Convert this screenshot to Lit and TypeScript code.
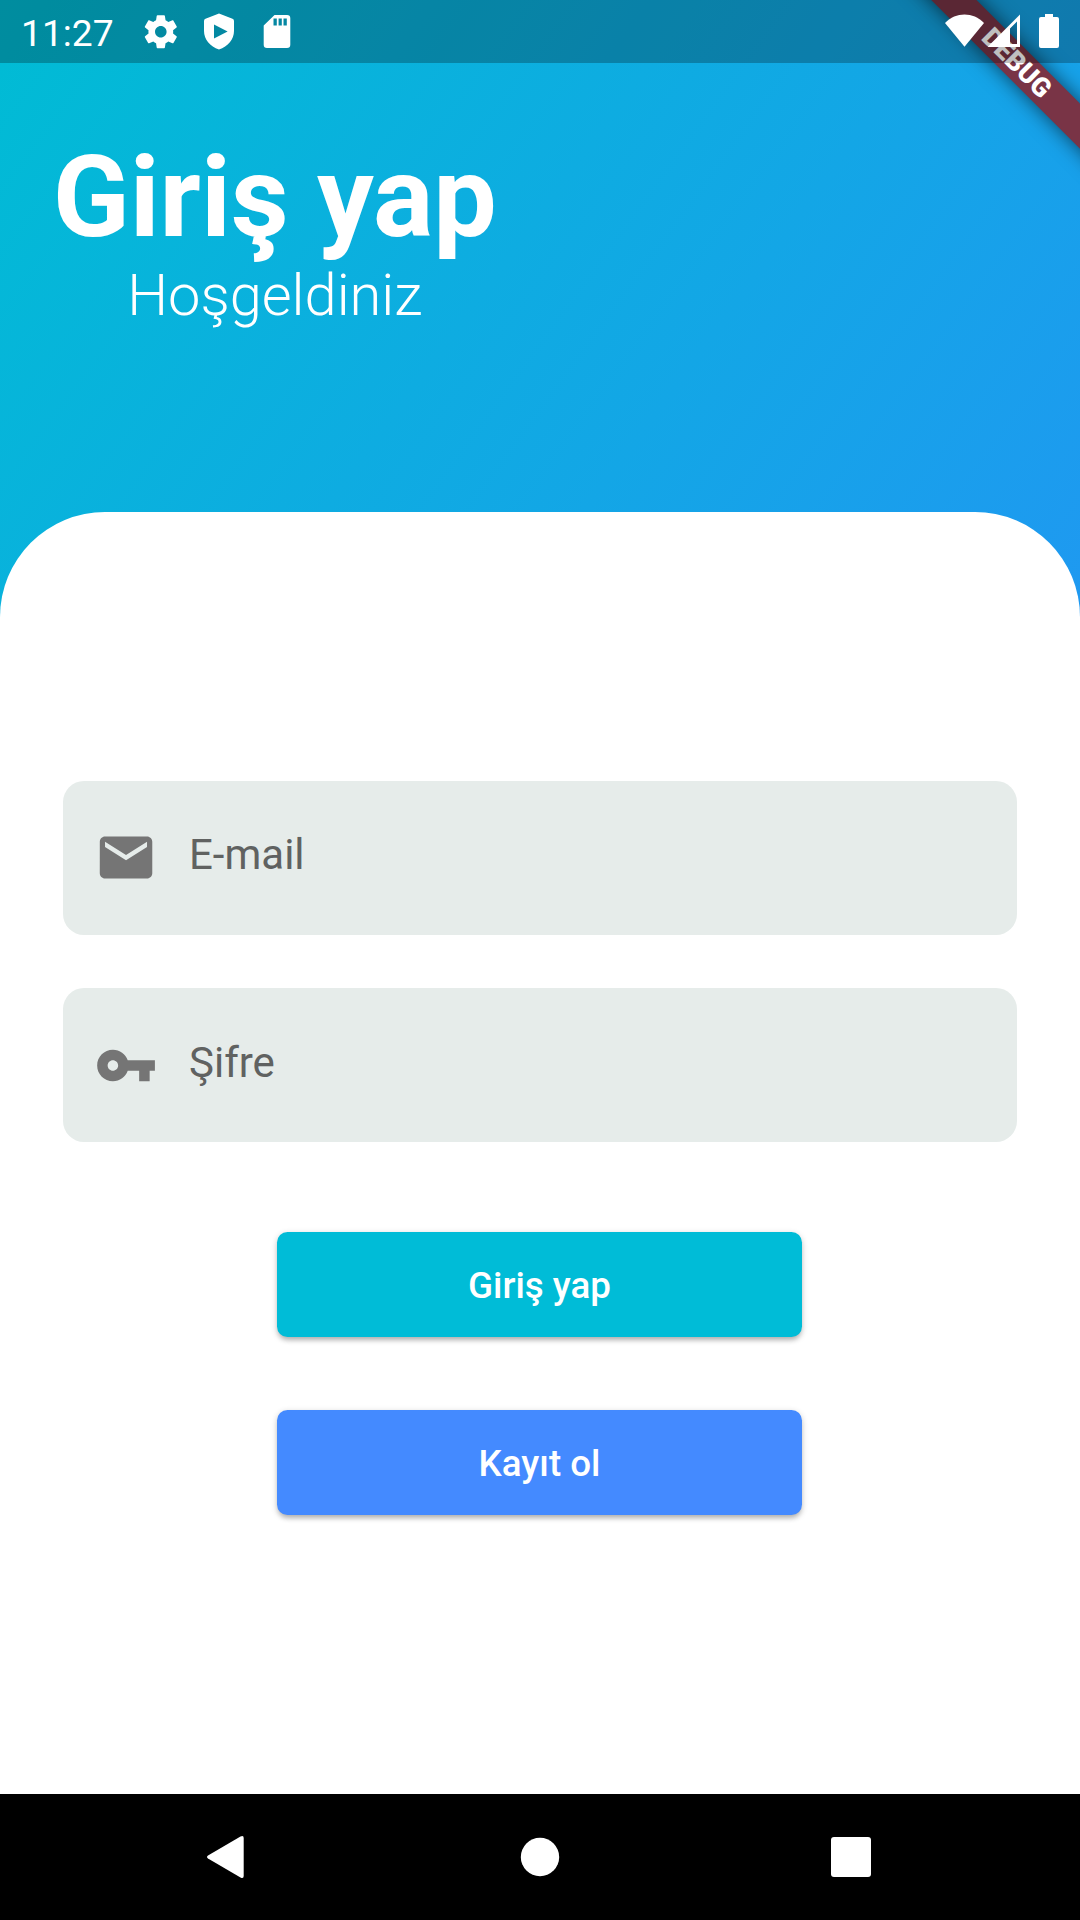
import { LitElement, html, svg, css } from "lit";
import { customElement, property } from "lit/decorators.js";

const FONT = css`Roboto, "Noto Sans", sans-serif`;

@customElement("status-bar")
class StatusBar extends LitElement {
  static styles = css`
    :host { display: flex; align-items: center; height: 63px; background: rgba(0, 0, 0, 0.25); color: #fff; font-family: ${FONT}; }
    .clock { width: 141px; padding: 3px 0 0 21px; box-sizing: border-box; font-size: 37.2px; line-height: 63px; }
    svg { display: block; flex: none; fill: currentColor; }
  `;
  render() {
    return html`
      <div class="clock">11:27</div>
      <svg width="939" height="63" viewBox="141 0 939 63">
        <g transform="translate(141 12) scale(1.65)">
          <path d="M19.43 12.98c.04-.32.07-.64.07-.98s-.03-.66-.07-.98l2.11-1.65c.19-.15.24-.42.12-.64l-2-3.46c-.12-.22-.39-.3-.61-.22l-2.49 1c-.52-.4-1.08-.73-1.69-.98l-.38-2.65C14.46 2.18 14.25 2 14 2h-4c-.25 0-.46.18-.49.42l-.38 2.65c-.61.25-1.17.59-1.69.98l-2.49-1c-.23-.09-.49 0-.61.22l-2 3.46c-.13.22-.07.49.12.64l2.11 1.65c-.04.32-.07.65-.07.98s.03.66.07.98l-2.11 1.65c-.19.15-.24.42-.12.64l2 3.46c.12.22.39.3.61.22l2.49-1c.52.4 1.08.73 1.69.98l.38 2.65c.03.24.24.42.49.42h4c.25 0 .46-.18.49-.42l.38-2.65c.61-.25 1.17-.59 1.69-.98l2.49 1c.23.09.49 0 .61-.22l2-3.46c.12-.22.07-.49-.12-.64l-2.11-1.65zM12 15.5c-1.93 0-3.5-1.57-3.5-3.5s1.57-3.5 3.5-3.5 3.5 1.57 3.5 3.5-1.57 3.5-3.5 3.5z"></path>
        </g>
        <path fill-rule="evenodd" d="M219 13.6L205.500 18.800Q204 19.400 204 21V31C204 39.5 210 46.6 219 49.4C228 46.6 234 39.5 234 31V21Q234 19.400 232.500 18.800ZM214 24.6L227.6 31.6L214 38.4Z"></path>
        <path fill-rule="evenodd" d="M274.5 15H287a3.3 3.3 0 0 1 3.3 3.3V44.700a3.300 3.300 0 0 1-3.300 3.300H267a3.300 3.300 0 0 1-3.300-3.300V25.500ZM273.500 18.500V25.500H276.800V18.500ZM278.600 18.500V25.500H281.800V18.500ZM283.500 18.500V25.500H286.800V18.500Z"></path>
        <path d="M945 23C956 11.700 973 11.700 984 23L964.500 46.800Z"></path>
        <path fill-rule="evenodd" d="M1020 14.500V47H987.500ZM1010 28.500V44H1017V21.500Z"></path>
        <path d="M1045 14H1053V17H1057a2 2 0 0 1 2 2V46a2 2 0 0 1-2 2H1041a2 2 0 0 1-2-2V19a2 2 0 0 1 2-2H1045Z"></path>
      </svg>
    `;
  }
}

@customElement("input-field")
class InputField extends LitElement {
  @property() label = "";
  @property() icon = "";
  static styles = css`
    :host { display: flex; align-items: center; height: 154.4px; padding-left: 31px; box-sizing: border-box; border-radius: 21px; background: #e6ecea; font-family: ${FONT}; }
    svg { display: block; width: 63px; height: 63px; fill: #757575; }
    .label { margin-left: 32px; font-size: 42px; line-height: 50px; color: #606261; padding-bottom: 4.6px; }
  `;
  render() {
    const shape = this.icon === "mail"
      ? svg`<path d="M20 4H4c-1.100 0-1.990.900-1.990 2L2 18c0 1.100.900 2 2 2h16c1.100 0 2-.900 2-2V6c0-1.100-.900-2-2-2zm0 4l-8 5-8-5V6l8 5 8-5v2z"></path>`
      : svg`<path d="M12.650 10C11.830 7.670 9.610 6 7 6c-3.310 0-6 2.690-6 6s2.690 6 6 6c2.610 0 4.830-1.670 5.650-4H17v4h4v-4h2v-4H12.650zM7 14c-1.100 0-2-.900-2-2s.900-2 2-2 2 .900 2 2-.900 2-2 2z"></path>`;
    return html`<svg viewBox="-0.2 0 24 24">${shape}</svg><div class="label">${this.label}</div>`;
  }
}

@customElement("app-root")
class AppRoot extends LitElement {
  static styles = css`
    :host { display: block; font-family: ${FONT}; }
    .screen { position: relative; display: flex; flex-direction: column; width: 1080px; height: 1920px; overflow: hidden; background: #000; }
    .body { display: flex; flex-direction: column; height: 1794px; background: linear-gradient(126.1deg, #00bcd4, #2196f3) 0 0 / 1080px 787px no-repeat; }
    status-bar { position: relative; z-index: 2; flex: none; }
    .header { display: flex; flex-direction: column; align-items: center; width: 496.6px; padding: 73px 0 0 53px; height: 449px; box-sizing: border-box; flex: none; color: #fff; white-space: nowrap; }
    .title { font-size: 112.9px; line-height: 123px; font-weight: 700; margin: 0; }
    .welcome { font-size: 57.75px; line-height: 72px; font-weight: 300; }
    .card { flex: 1; display: flex; flex-direction: column; align-items: center; padding-top: 268.6px; border-radius: 105px 105px 0 0; background: #fff; }
    .fields { display: flex; flex-direction: column; gap: 53px; width: 954px; }
    .actions { display: flex; flex-direction: column; gap: 73.4px; width: 525px; margin: 89.6px 1px 0 0; }
    .button { height: 105px; padding: 2px 0 0; border: 0; border-radius: 10.5px; color: #fff; font: 500 36.75px/44px ${FONT}; box-shadow: 0 5px 5px -2px rgba(0, 0, 0, 0.17), 0 2px 6px rgba(0, 0, 0, 0.22); }
    .login { padding-top: 4px; background: #00bcd7; }
    .register { background: #448aff; }
    .nav { height: 126px; }
    .nav svg { display: block; fill: #fff; }
    .banner { position: absolute; z-index: 1; top: 0; right: 0; width: 210px; height: 210px; overflow: hidden; }
    .ribbon { position: absolute; left: -3px; top: 46.6px; width: 300px; height: 31.5px; transform: rotate(45deg); display: flex; align-items: center; justify-content: center; background: #793446; color: #fff; font-size: 26.8px; font-weight: 900; box-shadow: 0 0 20px rgba(0, 0, 0, 0.6); }
  `;
  render() {
    return html`
      <div class="screen">
        <div class="body">
          <status-bar></status-bar>
          <div class="header">
            <h1 class="title">Giriş yap</h1>
            <div class="welcome">Hoşgeldiniz</div>
          </div>
          <div class="card">
            <div class="fields">
              <input-field icon="mail" label="E-mail"></input-field>
              <input-field icon="key" label="Şifre"></input-field>
            </div>
            <div class="actions">
              <button class="button login">Giriş yap</button>
              <button class="button register">Kayıt ol</button>
            </div>
          </div>
        </div>
        <div class="nav">
          <svg width="1080" height="126" viewBox="0 0 1080 126">
            <path d="M208 61.500L240.500 42.500Q243.700 41 243.700 44V82Q243.700 85 240.500 83.500L208 64.500Q206 63 208 61.500Z"></path>
            <circle cx="540" cy="63" r="19.200"></circle>
            <rect x="831" y="43" width="40" height="40" rx="3"></rect>
          </svg>
        </div>
        <div class="banner"><div class="ribbon">DEBUG</div></div>
      </div>
    `;
  }
}
